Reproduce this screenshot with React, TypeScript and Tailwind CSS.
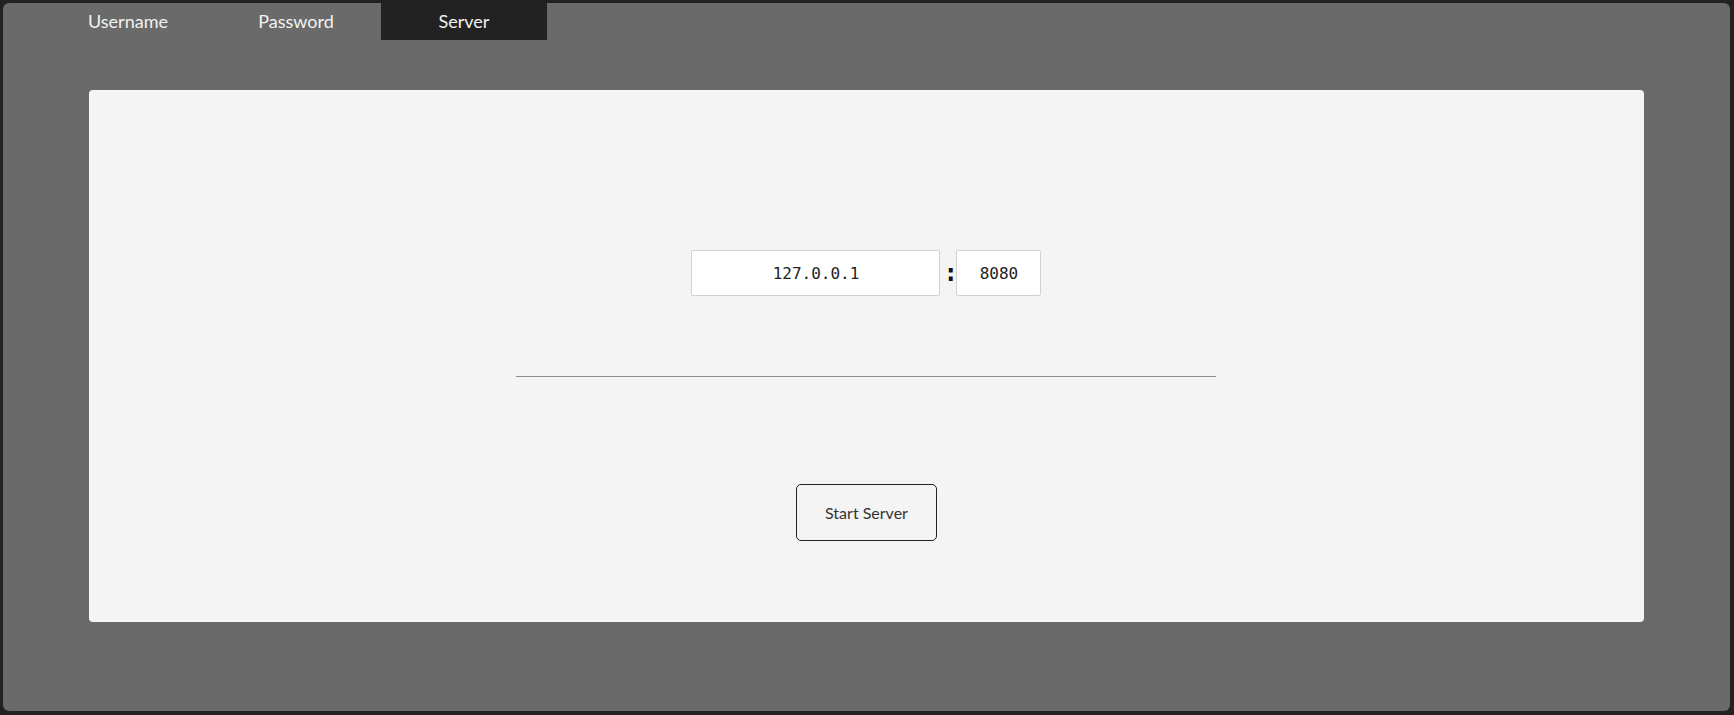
import { useState } from "react";

const tabs = ["Username", "Password", "Server"];

export default function App() {
  const [active, setActive] = useState("Server");
  const [host, setHost] = useState("127.0.0.1");
  const [port, setPort] = useState("8080");

  return (
    <div className="h-[715px] w-full bg-[#222222] pt-[3px] pl-[3px] pr-[4px] pb-[4px]">
      <div
        className="h-full w-full rounded-[6px] bg-[#6a6a6a] flex flex-col"
        style={{ fontFamily: "Lato, 'Noto Sans', sans-serif" }}
      >
        {/* tab bar */}
        <div className="flex gap-[2px] ml-[42px]">
          {tabs.map((t) => (
            <button
              key={t}
              onClick={() => setActive(t)}
              className={
                "w-[166px] h-[37px] flex items-center justify-center text-[18px] text-[#f2f2f2] " +
                (active === t ? "bg-[#222222]" : "bg-transparent")
              }
            >
              {t}
            </button>
          ))}
        </div>

        <div className="mt-[50px] mx-auto w-[90%] rounded-[4px] bg-[#f4f4f4] flex flex-col items-center pt-[160px] pb-[81px]">
          <div className="flex items-center gap-[3px]">
            <input
              value={host}
              onChange={(e) => setHost(e.target.value)}
              className="w-[249px] h-[46px] bg-white border border-[#d2d2d2] rounded-[2px] text-center text-[16px] text-[#222] outline-none"
              style={{ fontFamily: "'DejaVu Sans Mono', monospace" }}
            />
            <span
              className="w-[10px] text-center text-[24px] leading-none font-bold text-[#111]"
              style={{ fontFamily: "'DejaVu Sans Mono', monospace" }}
            >
              :
            </span>
            <input
              value={port}
              onChange={(e) => setPort(e.target.value)}
              className="w-[85px] h-[46px] bg-white border border-[#d2d2d2] rounded-[2px] text-center text-[16px] text-[#222] outline-none"
              style={{ fontFamily: "'DejaVu Sans Mono', monospace" }}
            />
          </div>

          <hr className="w-[700px] mt-[80px] border-0 border-t border-[#8c8c8c]" />

          <button className="mt-[107px] w-[141px] h-[57px] rounded-[5px] border border-[#222] bg-transparent text-[16px] text-[#333]">
            Start Server
          </button>
        </div>
      </div>
    </div>
  );
}
